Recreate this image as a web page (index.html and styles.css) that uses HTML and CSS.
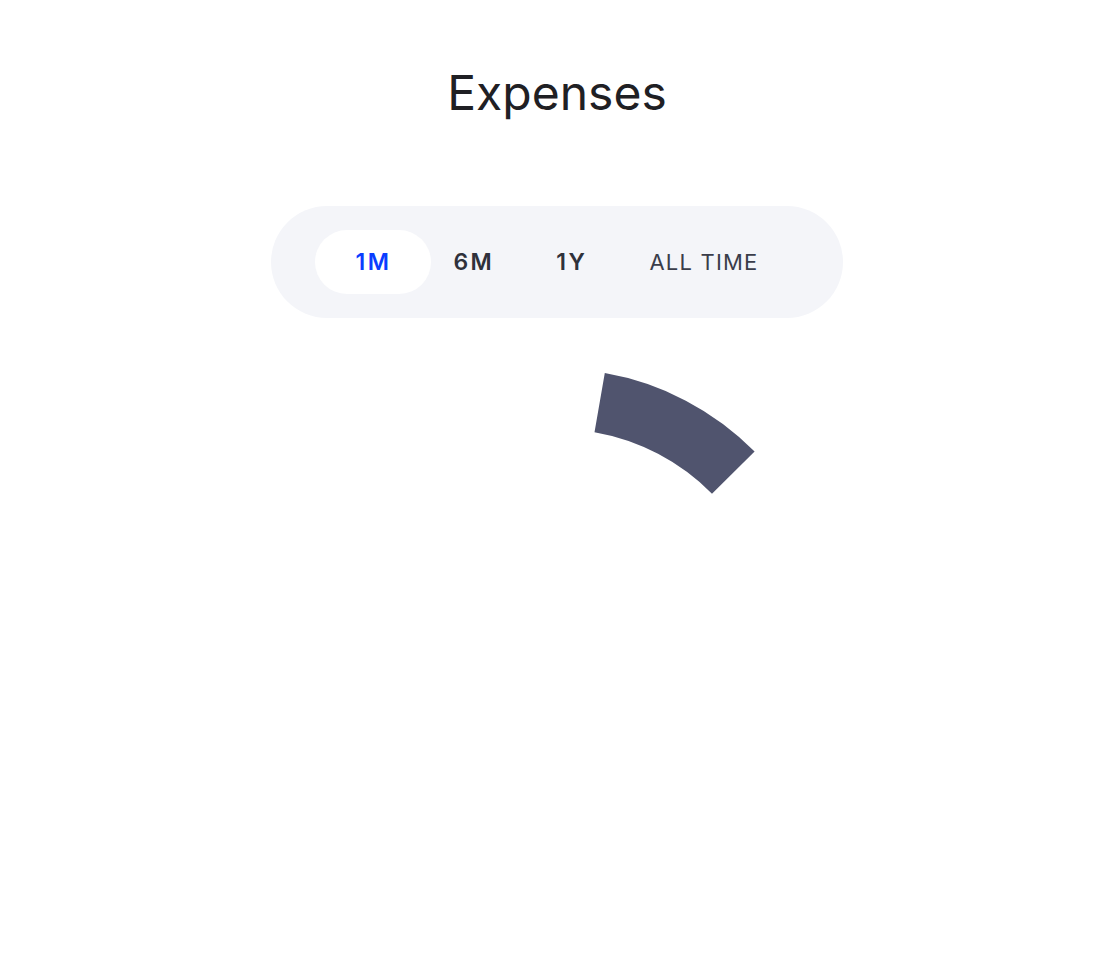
FILE: index.html
```html
<!DOCTYPE html>
<html>
<head>
<meta charset="utf-8">
<link rel="stylesheet" href="styles.css">
</head>
<body>
<main class="page">
  <h1 class="title">Expenses</h1>
  <nav class="range">
    <button class="tab tab-active">1M</button>
    <button class="tab tab-bold tab-after-active">6M</button>
    <button class="tab tab-bold">1Y</button>
    <button class="tab tab-light">ALL TIME</button>
  </nav>
  <div class="chart">
    <svg width="560" height="560" viewBox="0 0 560 560">
      <path d="M327.8 6.1 A278 278 0 0 1 477.6 84.5 L435 126.7 A218 218 0 0 0 317.5 65.2 Z" fill="#50546e"/>
    </svg>
  </div>
</main>
</body>
</html>
```
FILE: styles.css
```css
html, body {
  margin: 0;
  padding: 0;
  background: #ffffff;
}
.page {
  display: flex;
  flex-direction: column;
  align-items: center;
  font-family: Inter, "Noto Sans", sans-serif;
}
.title {
  margin: 64px 0 0;
  font-size: 48px;
  line-height: 58px;
  font-weight: 400;
  color: #1f2024;
}
.range {
  margin-top: 84px;
  display: flex;
  align-items: center;
  background: #f4f5f9;
  border-radius: 56px;
  padding: 24px 52px 24px 44px;
}
.tab {
  height: 64px;
  border: 0;
  background: transparent;
  font-family: Inter, "Noto Sans", sans-serif;
  font-size: 23px;
  letter-spacing: 2.5px;
  padding: 0 30px 0 32px;
  color: #2f313b;
  cursor: pointer;
}
.tab-active {
  background: #ffffff;
  border-radius: 32px;
  color: #0a3dff;
  font-weight: 600;
  padding: 0 40px 0 40px;
}
.tab-after-active {
  padding-left: 22px;
}
.tab-bold {
  font-weight: 600;
}
.tab-light {
  font-size: 22px;
  font-weight: 400;
  letter-spacing: 1.2px;
  color: #3a3d4a;
  padding-right: 32px;
}
.chart {
  margin-top: 49px;
  display: flex;
  justify-content: center;
}
.chart svg {
  display: block;
}
```
